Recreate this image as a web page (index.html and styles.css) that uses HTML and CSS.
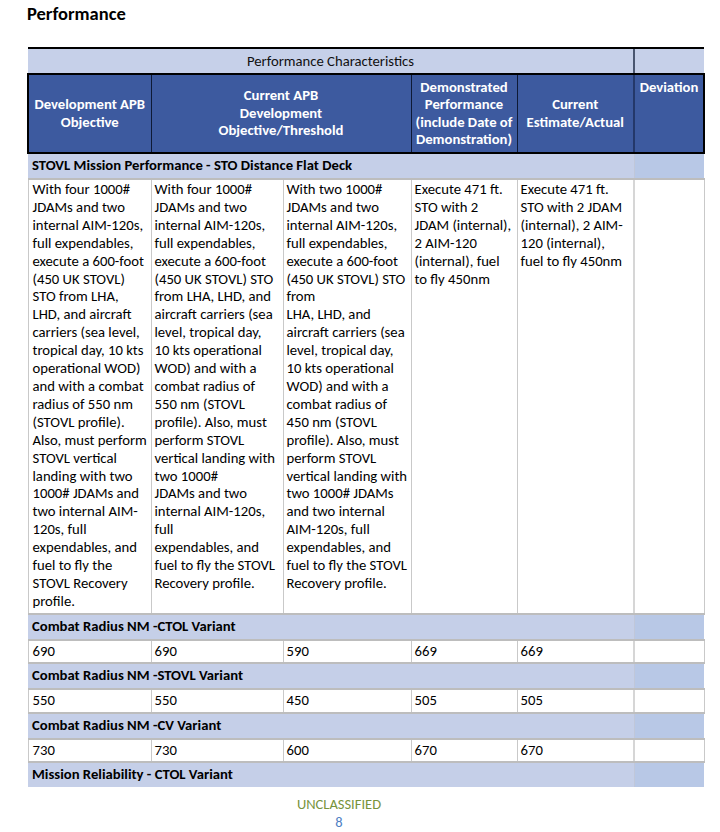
FILE: index.html
```html
<!DOCTYPE html>
<html>
<head>
<meta charset="utf-8">
<link rel="stylesheet" href="styles.css">
</head>
<body>
<div class="page">
  <h1 class="title">Performance</h1>
  <table class="perf">
    <colgroup>
      <col class="c1"><col class="c2"><col class="c3"><col class="c4"><col class="c5"><col class="c6">
    </colgroup>
    <tr class="cap">
      <td colspan="5" class="cap-text">Performance Characteristics</td>
      <td class="cap-last"></td>
    </tr>
    <tr class="head">
      <th class="h1">Development APB<br>Objective</th>
      <th colspan="2" class="h2">Current APB<br>Development<br>Objective/Threshold</th>
      <th class="h3">Demonstrated<br>Performance<br>(include Date of<br>Demonstration)</th>
      <th class="h4">Current<br>Estimate/Actual</th>
      <th class="h5">Deviation</th>
    </tr>
    <tr class="sec">
      <td colspan="5">STOVL Mission Performance - STO Distance Flat Deck</td>
      <td class="sec-last"></td>
    </tr>
    <tr class="data tall">
      <td>With four 1000#<br>JDAMs and two<br>internal AIM-120s,<br>full expendables,<br>execute a 600-foot<br>(450 UK STOVL)<br>STO from LHA,<br>LHD, and aircraft<br>carriers (sea level,<br>tropical day, 10 kts<br>operational WOD)<br>and with a combat<br>radius of 550 nm<br>(STOVL profile).<br>Also, must perform<br>STOVL vertical<br>landing with two<br>1000# JDAMs and<br>two internal AIM-<br>120s, full<br>expendables, and<br>fuel to fly the<br>STOVL Recovery<br>profile.</td>
      <td>With four 1000#<br>JDAMs and two<br>internal AIM-120s,<br>full expendables,<br>execute a 600-foot<br>(450 UK STOVL) STO<br>from LHA, LHD, and<br>aircraft carriers (sea<br>level, tropical day,<br>10 kts operational<br>WOD) and with a<br>combat radius of<br>550 nm (STOVL<br>profile). Also, must<br>perform STOVL<br>vertical landing with<br>two 1000#<br>JDAMs and two<br>internal AIM-120s,<br>full<br>expendables, and<br>fuel to fly the STOVL<br>Recovery profile.</td>
      <td>With two 1000#<br>JDAMs and two<br>internal AIM-120s,<br>full expendables,<br>execute a 600-foot<br>(450 UK STOVL) STO<br>from<br>LHA, LHD, and<br>aircraft carriers (sea<br>level, tropical day,<br>10 kts operational<br>WOD) and with a<br>combat radius of<br>450 nm (STOVL<br>profile). Also, must<br>perform STOVL<br>vertical landing with<br>two 1000# JDAMs<br>and two internal<br>AIM-120s, full<br>expendables, and<br>fuel to fly the STOVL<br>Recovery profile.</td>
      <td>Execute 471 ft.<br>STO with 2<br>JDAM (internal),<br>2 AIM-120<br>(internal), fuel<br>to fly 450nm</td>
      <td>Execute 471 ft.<br>STO with 2 JDAM<br>(internal), 2 AIM-<br>120 (internal),<br>fuel to fly 450nm</td>
      <td></td>
    </tr>
    <tr class="sec">
      <td colspan="5">Combat Radius NM -CTOL Variant</td>
      <td class="sec-last"></td>
    </tr>
    <tr class="data">
      <td>690</td><td>690</td><td>590</td><td>669</td><td>669</td><td></td>
    </tr>
    <tr class="sec">
      <td colspan="5">Combat Radius NM -STOVL Variant</td>
      <td class="sec-last"></td>
    </tr>
    <tr class="data">
      <td>550</td><td>550</td><td>450</td><td>505</td><td>505</td><td></td>
    </tr>
    <tr class="sec">
      <td colspan="5">Combat Radius NM -CV Variant</td>
      <td class="sec-last"></td>
    </tr>
    <tr class="data">
      <td>730</td><td>730</td><td>600</td><td>670</td><td>670</td><td></td>
    </tr>
    <tr class="sec last">
      <td colspan="5">Mission Reliability - CTOL Variant</td>
      <td class="sec-last"></td>
    </tr>
  </table>
  <div class="footer">
    <div class="class-mark">UNCLASSIFIED</div>
    <div class="page-num">8</div>
  </div>
</div>
</body>
</html>
```

FILE: styles.css
```css
html, body {
  margin: 0;
  padding: 0;
  background: #ffffff;
}
body {
  font-family: Carlito, Lato, "Liberation Sans", sans-serif;
  color: #000000;
}
.page {
  padding: 3px 0 0 27px;
  width: 676px;
}
.title {
  margin: 0;
  font-size: 18.5px;
  font-weight: 700;
  line-height: 22px;
  height: 44px;
}
.perf {
  border-collapse: collapse;
  table-layout: fixed;
  width: 676px;
  font-size: 14.7px;
  line-height: 17.9px;
}
.c1 { width: 123px; }
.c2 { width: 132px; }
.c3 { width: 128px; }
.c4 { width: 106px; }
.c5 { width: 117px; }
.c6 { width: 70px; }
.perf td, .perf th {
  padding: 0;
  vertical-align: top;
}
.cap td {
  background: #c6d0e9;
  border-top: 2px solid #000000;
  border-bottom: 2px solid #000000;
  height: 23px;
  vertical-align: middle;
  padding-top: 1px;
}
.cap-text {
  text-align: center;
  color: #111111;
}
.cap-last {
  border-left: 2px solid #4a5670;
}
.head th {
  background: #3d5a9f;
  color: #ffffff;
  font-weight: 700;
  line-height: 17.5px;
  text-align: center;
  vertical-align: middle;
  height: 73px;
  border-bottom: 2px solid #000000;
  border-left: 1px solid #0e1a36;
  padding: 0 1px;
}
.head th.h1 { border-left: 2px solid #000000; }
.head th.h5 {
  vertical-align: top;
  padding-top: 4px;
  border-left: 2px solid #24386a;
  border-right: 2px solid #000000;
}
.sec td {
  background: #c5cfe8;
  height: 24px;
  font-weight: 700;
  vertical-align: middle;
  padding-left: 4px;
  white-space: nowrap;
  border-bottom: 2px solid #bdbdbd;
}
.sec td.sec-last {
  background: #b8c8e6;
  border-left: 1px solid #c0c7d9;
  padding: 0;
}
.sec.last td { border-bottom: none; height: 24px; }
.data td {
  background: #ffffff;
  border-left: 1px solid #c9c9c9;
  border-bottom: 2px solid #bdbdbd;
  padding: 1px 2px 1px 3px;
  white-space: nowrap;
  height: 19.5px;
  vertical-align: middle;
}
.data td:first-child {
  border-left: 1px solid #c9c9c9;
  padding-left: 4px;
}
.data td:last-child {
  border-left: 2px solid #d6d6d6;
  border-right: 1px solid #c9c9c9;
}
.data.tall td {
  vertical-align: top;
  padding-top: 1px;
  padding-bottom: 2px;
}
.footer {
  margin-top: 8px;
  text-align: center;
  font-size: 14.5px;
  line-height: 18px;
  width: 624px;
}
.class-mark { color: #77933c; }
.page-num { color: #4f7fc4; line-height: 18px; }
```
